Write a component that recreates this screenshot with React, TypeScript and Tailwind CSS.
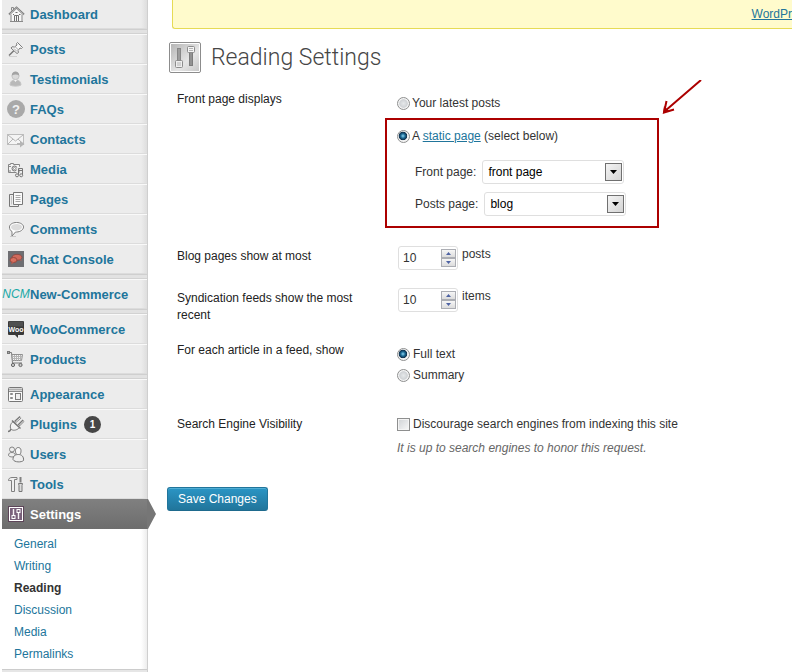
import React, { useState } from "react";

type IconProps = { children: React.ReactNode; w?: number; h?: number };

function Glyph({ children, w = 18, h = 18 }: IconProps) {
  return (
    <svg width={w} height={h} viewBox={`0 0 ${w} ${h}`} fill="none" stroke="#8a8a8a" strokeWidth="1" aria-hidden="true">
      {children}
    </svg>
  );
}

const HomeIcon = () => (
  <Glyph>
    <path d="M4.500 9 9.500 5l5 4v7h-10z" fill="#f7f7f7" stroke="none" />
    <path d="M2 9.500 9.500 2.500 17 9.500" stroke="#7c7c7c" strokeWidth="1.800" />
    <path d="M2.500 9.300 9.500 2.800l7 6.500" stroke="#dcdcdc" strokeWidth=".6" />
    <path d="M4.500 5.500v-3h2v1.500M4 9.500v7M15 9.500v7M3 16.500h13" />
    <path d="M7.500 16v-5.500h4V16M9.500 10.500V16M6 9.500h1M12 9.500h1.500M8.500 7.500h2" stroke="#6f6f6f" />
  </Glyph>
);

const PinIcon = () => (
  <Glyph>
    <path d="m2 15.500 5-5" stroke="#777" strokeWidth="1.400" />
    <path d="m10.500 2.500 5 5-1 1-1.500-.5-2 2.500.5 2-1.500 1-6-5.500 1-1.200 2.500.2 2.500-2-.5-1.500z" fill="#f8f8f8" stroke="#7c7c7c" />
    <path d="m8.500 7 3 3M7 8.500l3 3" stroke="#aaa" />
    <path d="M2 16.500h8" stroke="#d0d0d0" />
  </Glyph>
);

const PersonIcon = () => (
  <Glyph>
    <path d="M3 15c0-3.500 2-4.500 4-5h3c2 .5 4 1.500 4 5-2 1.500-9 1.500-11 0z" fill="#b9b9b9" stroke="#c6c6c6" />
    <circle cx="8.500" cy="6" r="3.600" fill="#dadada" stroke="#c4c4c4" />
    <path d="M4.800 5.500c0-5.500 7.400-5.500 7.400 0-2-1.500-5-1.500-7.400 0z" fill="#a3a3a3" stroke="none" />
    <path d="m7 10 1.500 2L10 10z" fill="#f5f5f5" stroke="none" />
  </Glyph>
);

const QuestionIcon = () => (
  <span className="flex size-[18px] items-center justify-center rounded-full bg-[#a9a9a9] text-[13px] font-bold text-[#f2f2f2]">?</span>
);

const MailIcon = () => (
  <Glyph>
    <rect x=".5" y="4.500" width="16" height="10" fill="#f4f4f4" stroke="#bdbdbd" />
    <path d="m1 5 7.500 6L16 5M1 14l5-5M16 14l-5-5" stroke="#b5b5b5" />
    <path d="M10 13h3v-2.500l4.500 3.500-4.500 3.500V15h-3z" fill="#b5b5b5" stroke="none" />
  </Glyph>
);

const MediaIcon = () => (
  <Glyph>
    <path d="M1.500 4.500h2v-1h3v1h6v8h-11z" fill="#f4f4f4" stroke="#858585" />
    <path d="M2 6.500h2M2 11h2" />
    <circle cx="7.500" cy="8.500" r="2.500" fill="#ddd" stroke="#777" />
    <circle cx="7.500" cy="8.500" r="1" fill="#fff" stroke="#999" />
    <path d="M11 15V8.500l5-1V15" stroke="#ececec" strokeWidth="3" />
    <path d="M11.500 15V8.500h4V15M11.500 10.500h4" stroke="#777" />
    <circle cx="10" cy="15.300" r="1.500" fill="#eee" stroke="#777" />
    <circle cx="14.200" cy="15.300" r="1.500" fill="#eee" stroke="#777" />
  </Glyph>
);

const PagesIcon = () => (
  <Glyph>
    <path d="M2.500 4.500h9v12h-9z" fill="#eee" stroke="#777" />
    <path d="M6.500 2.500h9v12h-9z" fill="#fafafa" stroke="#777" />
    <path d="M8.500 5.500h5M8.500 7.500h5M8.500 9.500h5M8.500 11.500h5" stroke="#a8a8a8" />
    <path d="M4.500 6v8.500" stroke="#c4c4c4" />
  </Glyph>
);

const CommentIcon = () => (
  <Glyph>
    <path d="M9.500 2.500c4 0 7 2 7 4.500s-3 5-7 5h-1L5 16v-4.500C3.300 10.700 2.500 9 2.500 7c0-2.500 3-4.500 7-4.500z" fill="#fff" stroke="#7d7d7d" />
    <path d="M9.500 4c3 0 5.500 1.200 5.500 3s-2.500 3.500-5.500 3.500S4 9 4 7s2.500-3 5.500-3z" fill="#dcdcdc" stroke="none" />
    <path d="M3 16.500h6" stroke="#c8c8c8" />
  </Glyph>
);

const ChatIcon = () => (
  <Glyph>
    <rect x="1" y="1" width="16" height="16" fill="#6e6e72" stroke="none" />
    <ellipse cx="10" cy="7.300" rx="5" ry="3" fill="#d06a5c" stroke="#8e4b45" />
    <ellipse cx="6.500" cy="10" rx="3.500" ry="2.500" fill="#d9705f" stroke="#96483f" />
    <path d="m5 12-1 2.500 3-2zM13 9l2 2-4-1.500z" fill="#c05a4c" stroke="none" />
  </Glyph>
);

const WooIcon = () => (
  <span className="relative flex size-[18px] items-center justify-center">
    <svg className="absolute inset-0" width="18" height="18" viewBox="0 0 18 18" aria-hidden="true">
      <path d="M2 1h14q1 0 1 1v12q0 1-1 1h-5v3l-3-3H2q-1 0-1-1V2q0-1 1-1z" fill="#393939" />
      <path d="M2 1.500h14v5H2z" fill="#505050" />
    </svg>
    <span className="relative text-[7px] leading-none font-bold text-white">Woo</span>
  </span>
);

const CartIcon = () => (
  <Glyph>
    <rect x=".500" y="1.500" width="2" height="2" fill="#aaa" stroke="#777" />
    <path d="M3 2.500h1.500l1 10.500h9.500" stroke="#7d7d7d" />
    <path d="M5 4.500h10.500l-1 6H5.500z" fill="#f4f4f4" stroke="#909090" />
    <path d="M5 6.500h10M5.500 8.500h9.500M7.500 5v5.500M9.500 5v5.500M11.500 5v5.500M13.500 5v5.500" stroke="#b4b4b4" />
    <circle cx="6" cy="15" r="1.600" fill="#ccc" stroke="#666" />
    <circle cx="13.500" cy="15" r="1.600" fill="#ccc" stroke="#666" />
  </Glyph>
);

const AppearanceIcon = () => (
  <Glyph>
    <rect x="1.500" y="2.500" width="14" height="14" rx="1" fill="#fafafa" stroke="#777" />
    <path d="M2 4.500h13" stroke="#b0b0b0" strokeWidth="2" />
    <path d="M2 6.500h13" stroke="#8a8a8a" />
    <path d="M3.500 8.500h2v1h-2zM3.500 12.500h2v1h-2z" fill="#ccc" stroke="#8a8a8a" />
    <rect x="8.500" y="8.500" width="5" height="6" fill="#eee" stroke="#7a7a7a" />
  </Glyph>
);

const PlugIcon = () => (
  <Glyph>
    <path d="M1 16.500c2 0 2.500-1 3-2.500" stroke="#777" strokeWidth="1.400" />
    <path d="m6 6.500 6.500 6c-2 2.500-6 3.500-8 2s-1.500-5.500 1.500-8z" fill="#f3f3f3" stroke="#777" />
    <path d="m5 5.500 8.500 8" stroke="#777" strokeWidth="1.500" />
    <path d="m8 7 5.500-5M11.500 10.500l5-5" stroke="#777" strokeWidth="2.600" />
    <path d="m8.500 7 5-4.500M12 10.500l4.500-4.500" stroke="#f2f2f2" />
  </Glyph>
);

const UsersIcon = () => (
  <Glyph>
    <circle cx="5" cy="4.500" r="2.500" fill="#eee" stroke="#858585" />
    <path d="M1.500 10.500C1.500 8 3 7.500 5 7.500s3 1 3.500 3c-1 2-6 2-7 0z" fill="#eee" stroke="#858585" />
    <path d="M8.500 5.500c0-4 5.500-4 5.500 0s-1.200 4-2.700 4-2.800 0-2.800-4z" fill="#f7f7f7" stroke="#777" />
    <path d="M6 14.500c0-4 2.500-5 5.500-5s5.500 2 5 6c-2 2-9 2-10.500-1z" fill="#eee" stroke="#777" />
  </Glyph>
);

const ToolsIcon = () => (
  <Glyph>
    <path d="M1.500 5.500c0-2 1.500-3 3.500-3h5v2H7.500v12h-3v-11h-2z" fill="#f0f0f0" stroke="#808080" />
    <path d="M13.500 2v5.500" stroke="#808080" strokeWidth="2" />
    <path d="M11.500 8.500h4l-.5 2v6h-3v-6z" fill="#ddd" stroke="#777" />
  </Glyph>
);

const SettingsIcon = () => (
  <Glyph>
    <rect x="1.500" y="1.500" width="15" height="15" fill="#fff" stroke="#5d4559" />
    <rect x="3" y="3" width="12" height="12" fill="#79607a" stroke="none" />
    <path d="M6.500 4v6M11.500 8v6" stroke="#f7f2f6" strokeWidth="1.400" />
    <rect x="5" y="10.500" width="3" height="3" stroke="#fff" />
    <rect x="10" y="4.500" width="3" height="3" stroke="#fff" />
  </Glyph>
);

const NcmLogo = () => (
  <span className="font-['Liberation_Sans_Narrow','Liberation_Sans',sans-serif] text-[12px] leading-none font-normal text-[#19a8a6] italic">
    NCM
  </span>
);

function PageIcon() {
  return (
    <svg width="32" height="32" viewBox="0 0 32 32" aria-hidden="true">
      <defs>
        <linearGradient id="plate" x1="0" y1="0" x2="1" y2="1">
          <stop offset="0" stopColor="#b5b5b5" />
          <stop offset=".6" stopColor="#e6e6e6" />
          <stop offset="1" stopColor="#c8c8c8" />
        </linearGradient>
      </defs>
      <rect x=".5" y=".5" width="31" height="30" rx="1.500" fill="#fff" stroke="#8c8c8c" />
      <rect x="2" y="2" width="28" height="27" fill="url(#plate)" />
      <rect x="8.500" y="6.500" width="3" height="16" fill="#9c9c9c" stroke="#868686" />
      <rect x="20.500" y="8.500" width="3" height="15" fill="#929292" stroke="#7c7c7c" />
      <rect x="6.500" y="18.500" width="7" height="7" rx="1" fill="#efefef" stroke="#8c8c8c" />
      <path d="M8 21h4M8 23h4" stroke="#b4b4b4" />
      <rect x="18.500" y="4.500" width="7" height="6" rx="1" fill="#f4f4f4" stroke="#8c8c8c" />
      <path d="M20 6.500h4M20 8.500h4" stroke="#b4b4b4" />
    </svg>
  );
}

type Item = { label: string; icon: React.ReactNode; badge?: string };

const groups: Item[][] = [
  [{ label: "Dashboard", icon: <HomeIcon /> }],
  [
    { label: "Posts", icon: <PinIcon /> },
    { label: "Testimonials", icon: <PersonIcon /> },
    { label: "FAQs", icon: <QuestionIcon /> },
    { label: "Contacts", icon: <MailIcon /> },
    { label: "Media", icon: <MediaIcon /> },
    { label: "Pages", icon: <PagesIcon /> },
    { label: "Comments", icon: <CommentIcon /> },
    { label: "Chat Console", icon: <ChatIcon /> },
  ],
  [{ label: "New-Commerce", icon: <NcmLogo /> }],
  [
    { label: "WooCommerce", icon: <WooIcon /> },
    { label: "Products", icon: <CartIcon /> },
  ],
  [
    { label: "Appearance", icon: <AppearanceIcon /> },
    { label: "Plugins", icon: <PlugIcon />, badge: "1" },
    { label: "Users", icon: <UsersIcon /> },
    { label: "Tools", icon: <ToolsIcon /> },
  ],
];

const submenu = ["General", "Writing", "Reading", "Discussion", "Media", "Permalinks"];

function MenuRow({ item, first }: { item: Item; first: boolean }) {
  return (
    <a
      href="#"
      className={`flex items-center border-b border-b-[#dcdcdc] text-[13px] font-bold text-[#21759b] ${
        first ? "h-[29px]" : "h-[30px] border-t border-t-[#f9f9f9]"
      }`}
    >
      <span className="flex w-7 shrink-0 items-center justify-center">{item.icon}</span>
      {item.label}
      {item.badge && (
        <span className="ml-[7px] flex size-[17px] items-center justify-center rounded-full bg-[#464646] text-[10px] text-white">
          {item.badge}
        </span>
      )}
    </a>
  );
}

function Sidebar() {
  return (
    <nav className="ml-0.5 flex w-[146px] shrink-0 flex-col border-r border-[#cfcfcf] bg-[linear-gradient(to_left,#dedede,#ececec_6px)]">
      {groups.map((group, i) => (
        <React.Fragment key={i}>
          {i > 0 && <div className="h-[5px] border-y border-t-[#cfcfcf] border-b-[#d2d2d2] bg-[#e2e2e2]" />}
          {group.map((item) => (
            <MenuRow key={item.label} item={item} first={i === 0} />
          ))}
        </React.Fragment>
      ))}
      <a
        href="#"
        className="relative flex h-[30px] items-center bg-linear-to-b from-[#808080] to-[#6d6d6d] text-[13px] font-bold text-white"
      >
        <span className="flex w-7 shrink-0 items-center justify-center">
          <SettingsIcon />
        </span>
        Settings
        <svg className="absolute top-0 left-[145px]" width="10" height="30" viewBox="0 0 10 30" aria-hidden="true">
          <path d="M0 0h1l8 15-8 15H0z" fill="#767676" />
        </svg>
      </a>
      <ul className="bg-[linear-gradient(to_left,#ededed,#ffffff_6px)] py-1 text-[12px]">
        {submenu.map((s) => (
          <li key={s}>
            <a
              href="#"
              className={`flex h-[22px] items-center pl-3 ${s === "Reading" ? "font-bold text-[#333333]" : "text-[#21759b]"}`}
            >
              {s}
            </a>
          </li>
        ))}
      </ul>
      <div className="flex-1 border-t border-[#cccccc] bg-[#e6e6e6]" />
    </nav>
  );
}

function Radio(props: { id: string; name: string; defaultChecked?: boolean }) {
  return (
    <input
      type="radio"
      {...props}
      className="size-[13px] shrink-0 appearance-none rounded-full border border-[#8e8f8f] bg-[radial-gradient(circle_at_50%_50%,#e6e8ea_0,#cfd2d5_50%,#f4f4f4_60%)] checked:bg-[radial-gradient(circle_at_45%_45%,#8fd6f2_0,#1b6a96_25%,#10314d_45%,#f4f4f4_54%)]"
    />
  );
}

function PageSelect({ id, label, value }: { id: string; label: string; value: string }) {
  return (
    <div className="flex items-center gap-1.5">
      <label htmlFor={id}>{label}</label>
      <span className="relative">
        <select
          id={id}
          defaultValue={value}
          className="block h-6 w-[142px] appearance-none rounded-[3px] border border-[#dfdfdf] bg-white pl-[5px] text-[12px] text-black"
        >
          <option>{value}</option>
        </select>
        <span className="pointer-events-none absolute top-[3px] right-[2px] flex h-[18px] w-[17px] items-center justify-center border border-[#707070] bg-linear-to-br from-[#f4f4f4] to-[#d4d4d4]">
          <svg width="7" height="4" viewBox="0 0 7 4" aria-hidden="true">
            <path d="M0 0h7L3.500 4z" fill="#000" />
          </svg>
        </span>
      </span>
    </div>
  );
}

function Spinner({ id, unit }: { id: string; unit: string }) {
  const [value, setValue] = useState(10);
  const step =
    "flex h-[9px] w-[15px] items-center justify-center border border-[#abadb3] bg-linear-to-b from-[#f6f6f6] to-[#dcdcdc]";
  return (
    <div className="ml-px flex items-start gap-1">
      <span className="flex h-6 w-[60px] items-center justify-between rounded-[3px] border border-[#dfdfdf] bg-white pr-px pl-1">
        <input
          id={id}
          type="number"
          value={value}
          onChange={(e) => setValue(Number(e.target.value))}
          className="w-8 [appearance:textfield] text-[12px] text-[#333333] outline-none [&::-webkit-inner-spin-button]:appearance-none"
        />
        <span className="flex flex-col">
          <button type="button" aria-label="Increase" className={step} onClick={() => setValue(value + 1)}>
            <svg width="5" height="3" viewBox="0 0 5 3" aria-hidden="true">
              <path d="M0 3h5L2.500 0z" fill="#4d62a3" />
            </svg>
          </button>
          <button type="button" aria-label="Decrease" className={step} onClick={() => setValue(value - 1)}>
            <svg width="5" height="3" viewBox="0 0 5 3" aria-hidden="true">
              <path d="M0 0h5L2.500 3z" fill="#4d62a3" />
            </svg>
          </button>
        </span>
      </span>
      <span>{unit}</span>
    </div>
  );
}

const row = "grid grid-cols-[220px_1fr] items-start";

export default function App() {
  return (
    <div className="flex min-h-screen bg-white font-['Liberation_Sans',Arial,sans-serif] text-[12px] leading-[17px] text-[#333333]">
      <Sidebar />
      <main className="min-w-0 flex-1 pl-[19px]">
        <div className="ml-[5px] flex h-[29px] items-center justify-end overflow-hidden rounded-bl-[3px] border-b border-l border-[#e6db55] bg-[#fffbcc]">
          <a href="#" className="text-[#21759b] underline">
            WordPr
          </a>
        </div>

        <header className="mt-[13px] ml-0.5 flex h-8 items-center gap-2.5">
          <PageIcon />
          <h1 className="font-[Roboto,'Liberation_Sans',sans-serif] text-[23px] leading-8 font-light text-[#464646]">Reading Settings</h1>
        </header>

        <form className="pt-[17px]" onSubmit={(e) => e.preventDefault()}>
          <div className="ml-2.5 flex flex-col gap-[18px]">
            <div className={row} role="group" aria-labelledby="front">
              <span id="front" className="text-[#222222]">Front page displays</span>
              <div className="pt-1">
                <div className="flex items-center gap-0.5">
                  <Radio id="latest" name="front" />
                  <label htmlFor="latest">Your latest posts</label>
                </div>
                <div className="relative mt-1.5 -ml-3 w-[274px] border-2 border-[#ac0000] px-2.5 pt-2 pb-2.5">
                  <div className="flex items-center gap-0.5">
                    <Radio id="static" name="front" defaultChecked />
                    <label htmlFor="static">
                      A <a href="#" className="text-[#21759b] underline">static page</a> (select below)
                    </label>
                  </div>
                  <div className="mt-[15px] ml-[18px] flex flex-col gap-2">
                    <PageSelect id="front-page" label="Front page:" value="front page" />
                    <PageSelect id="posts-page" label="Posts page:" value="blog" />
                  </div>
                  <svg className="absolute -top-10 left-[274px]" width="44" height="38" viewBox="0 0 44 38" fill="none" stroke="#ac0000" strokeWidth="2" aria-hidden="true">
                    <path d="M40 0 4 31M5.500 21 3 32.500 13 29.500" />
                    <path d="m2 33 1-7 5 5z" fill="#ac0000" stroke="none" />
                  </svg>
                </div>
              </div>
            </div>

            <div className={row}>
              <label htmlFor="per-page" className="pt-0.5 text-[#222222]">Blog pages show at most</label>
              <Spinner id="per-page" unit="posts" />
            </div>

            <div className={row}>
              <label htmlFor="per-feed" className="pt-0.5 pr-5 text-[#222222]">Syndication feeds show the most recent</label>
              <Spinner id="per-feed" unit="items" />
            </div>

            <div className={row} role="group" aria-labelledby="feed">
              <span id="feed" className="text-[#222222]">For each article in a feed, show</span>
              <div className="flex flex-col gap-1 pt-1">
                <div className="flex items-center gap-[3px]">
                  <Radio id="full" name="feed" defaultChecked />
                  <label htmlFor="full">Full text</label>
                </div>
                <div className="flex items-center gap-[3px]">
                  <Radio id="summary" name="feed" />
                  <label htmlFor="summary">Summary</label>
                </div>
              </div>
            </div>

            <div className={`${row} mt-3.5`} role="group" aria-labelledby="seo">
              <span id="seo" className="text-[#222222]">Search Engine Visibility</span>
              <div>
                <div className="flex items-center gap-[3px]">
                  <input
                    id="discourage"
                    type="checkbox"
                    className="size-[13px] appearance-none border border-[#8e8f8f] bg-linear-to-br from-[#cfd2d5] to-[#f8f8f8] shadow-[inset_0_0_0_1px_#f4f4f4]"
                  />
                  <label htmlFor="discourage">Discourage search engines from indexing this site</label>
                </div>
                <p className="mt-[7px] text-[#666666] italic">It is up to search engines to honor this request.</p>
              </div>
            </div>
          </div>

          <button
            type="submit"
            className="mt-[30px] h-6 rounded-[3px] border border-[#21759b] border-b-[#1e6a8d] bg-linear-to-b from-[#2a95c5] to-[#21759b] px-2.5 text-[12px] text-white shadow-[inset_0_1px_0_rgba(120,200,230,0.5)]"
          >
            Save Changes
          </button>
        </form>
      </main>
    </div>
  );
}
